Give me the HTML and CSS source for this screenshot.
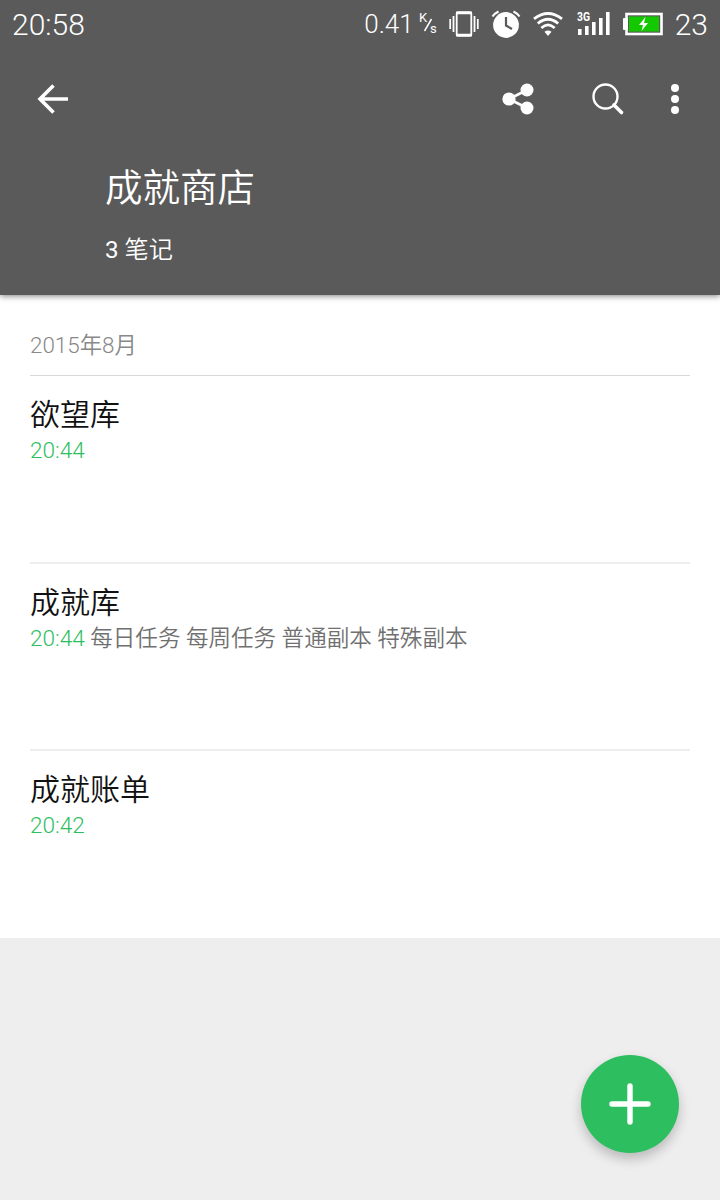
FILE: index.html
```html
<!DOCTYPE html>
<html lang="zh-CN">
  <head>
    <meta charset="UTF-8" />
    <meta name="viewport" content="width=device-width, initial-scale=1.0" />
    <title>成就商店</title>
    <link rel="stylesheet" href="styles.css">
  </head>
  <body>
    <header>
      <div class="statusbar">
        <span class="clock">20:58</span>
        <span class="speed">0.41</span>
        <svg class="unit" width="20" height="28" viewBox="0 0 20 28">
          <text x="0" y="12">K</text>
          <text x="11" y="23">s</text>
          <path d="M5.500 21L12.500 9" stroke="#fff" stroke-width="1.500" />
        </svg>
        <svg class="vibrate" width="30" height="28" viewBox="0 0 30 28" fill="none" stroke="#fff">
          <rect x="7.700" y="2.200" width="14.600" height="23.600" rx="1" stroke-width="1.800" />
          <path d="M7 3H23M7 25H23" stroke-width="2.600" />
          <path d="M4.500 6V22M25.500 6V22" stroke-width="1.800" />
          <path d="M1.200 9V19M28.800 9V19" stroke-width="1.700" />
        </svg>
        <svg class="alarm" width="30" height="28" viewBox="0 0 30 28">
          <circle cx="15" cy="15" r="12.900" fill="#fff" />
          <path d="M1.500 6.500Q3.500 3.500 7.500 1.500M28.500 6.500Q26.500 3.500 22.500 1.500" fill="none" stroke="#fff" stroke-width="2.200" />
          <path d="M15 7V15.500L21 19" fill="none" stroke="#5a5a5a" stroke-width="2.200" />
        </svg>
        <svg class="wifi" width="30" height="24" viewBox="0 0 30 24" fill="none" stroke="#fff" stroke-width="2.700">
          <path d="M1 6.800Q15 -3.800 29 6.800" />
          <path d="M4.800 11.500Q15 3 25.200 11.500" />
          <path d="M8.300 16Q15 9.800 21.700 16" />
          <path d="M11.500 19.800Q15 17 18.500 19.800L15 24Z" fill="#fff" stroke="none" />
        </svg>
        <svg class="signal" width="34" height="26" viewBox="0 0 34 26" fill="#fff">
          <text x="0" y="9.500" textLength="13" lengthAdjust="spacingAndGlyphs">3G</text>
          <rect x="1" y="18" width="3.600" height="6" />
          <rect x="8" y="15" width="3.600" height="9" />
          <rect x="15" y="11" width="3.600" height="13" />
          <rect x="22" y="7" width="3.600" height="17" />
          <rect x="29" y="1" width="3.600" height="23" />
        </svg>
        <svg class="battery" width="40" height="24" viewBox="0 0 40 24">
          <rect x="0" y="6" width="5" height="12" rx="1" fill="#fff" />
          <rect x="3.500" y="2" width="35" height="20" fill="none" stroke="#fff" stroke-width="2.600" />
          <rect x="6" y="4.500" width="30" height="15" fill="#14c800" />
          <path d="M22.500 5L16 13H20L18.500 19L25 11H21Z" fill="#fff" />
        </svg>
        <span class="level">23</span>
      </div>
      <nav>
        <svg class="back" width="34" height="34" viewBox="0 0 34 34" fill="none" stroke="#fff" stroke-width="3.600">
          <path d="M17.500 3.500L4 17L17.500 30.500M4 17H32" />
        </svg>
        <svg class="share" width="34" height="34" viewBox="0 0 34 34" fill="#fff">
          <path d="M26 8L8 17L26 26" fill="none" stroke="#fff" stroke-width="2.600" />
          <circle cx="8" cy="17" r="6.600" />
          <circle cx="26" cy="8" r="6.500" />
          <circle cx="26" cy="26" r="6.500" />
        </svg>
        <svg class="search" width="34" height="34" viewBox="0 0 34 34" fill="none" stroke="#fff">
          <circle cx="14.500" cy="14.500" r="12" stroke-width="2.400" />
          <path d="M23 23L30.500 30.500" stroke-width="3.600" stroke-linecap="round" />
        </svg>
        <svg class="more" width="10" height="34" viewBox="0 0 10 34" fill="#fff">
          <circle cx="5" cy="6" r="4" />
          <circle cx="5" cy="17" r="4" />
          <circle cx="5" cy="28" r="4" />
        </svg>
      </nav>
      <h1>成就商店</h1>
      <p class="count"><b>3</b> 笔记</p>
    </header>
    <main>
      <h2>2015年8月</h2>
      <article>
        <h3>欲望库</h3>
        <p><time>20:44</time></p>
      </article>
      <article>
        <h3>成就库</h3>
        <p><time>20:44</time> 每日任务 每周任务 普通副本 特殊副本</p>
      </article>
      <article>
        <h3>成就账单</h3>
        <p><time>20:42</time></p>
      </article>
    </main>
    <button class="add" aria-label="新建笔记">
      <svg width="42" height="42" viewBox="0 0 42 42" fill="none" stroke="#fff" stroke-width="5.400" stroke-linecap="round">
        <path d="M21 3V39M3 21H39" />
      </svg>
    </button>
  </body>
</html>
```

FILE: styles.css
```css
* {
  box-sizing: border-box;
}

body {
  margin: 0;
  min-height: 1200px;
  background-color: #eeeeee;
  font-family: Roboto, "Noto Sans CJK SC", sans-serif;
  font-weight: 300;
}

h1,
h2,
h3,
p {
  margin: 0;
  font-weight: 350;
}

svg {
  display: block;
  flex: none;
}

header {
  position: relative;
  height: 295px;
  color: #ffffff;
  background-color: #5a5a5a;
  box-shadow: 0 1px 6px rgba(0, 0, 0, 0.5);
}

.statusbar {
  display: flex;
  align-items: center;
  height: 48px;
  padding: 0 12px;
  font-size: 30px;
}

.clock {
  margin-right: auto;
}

.speed {
  font-size: 26px;
}

.unit {
  margin: 0 10px 0 5px;
}

.unit text {
  fill: #ffffff;
  font-size: 13px;
  font-weight: 400;
}

.alarm {
  margin: 0 12px 0 12px;
}

.signal {
  margin: 0 12px 0 14px;
}

.signal text {
  font-size: 12px;
  font-weight: 700;
}

.level {
  margin-left: 12px;
}

nav {
  display: flex;
  align-items: center;
  height: 102px;
  padding: 0 40px 0 36px;
}

.back {
  margin-right: auto;
}

.search {
  margin: 0 45px 0 56px;
}

h1 {
  padding-left: 105px;
  font-size: 37.5px;
  line-height: 77px;
}

.count {
  padding-left: 105px;
  font-size: 24.2px;
  line-height: 46px;
}

.count b {
  font-weight: 400;
}

main {
  padding: 0 30px;
  background-color: #ffffff;
}

h2 {
  height: 81px;
  padding-top: 20px;
  border-bottom: 1px solid #d8d8d8;
  font-size: 22.4px;
  line-height: 60px;
  color: #888888;
}

article {
  height: 187.5px;
  padding-top: 17px;
  border-bottom: 2px solid #eeeeee;
}

article:last-child {
  height: 187px;
  border-bottom: none;
}

h3 {
  font-size: 30px;
  line-height: 44px;
  color: #111111;
}

article p {
  font-size: 22.55px;
  line-height: 28px;
  color: #707070;
}

time {
  color: #2dbe60;
}

.add {
  position: fixed;
  right: 41px;
  bottom: 47px;
  display: flex;
  align-items: center;
  justify-content: center;
  width: 98px;
  height: 98px;
  padding: 0;
  border: none;
  border-radius: 50%;
  background-color: #2dbe60;
  box-shadow: 0 6px 12px rgba(0, 0, 0, 0.22);
}
```
